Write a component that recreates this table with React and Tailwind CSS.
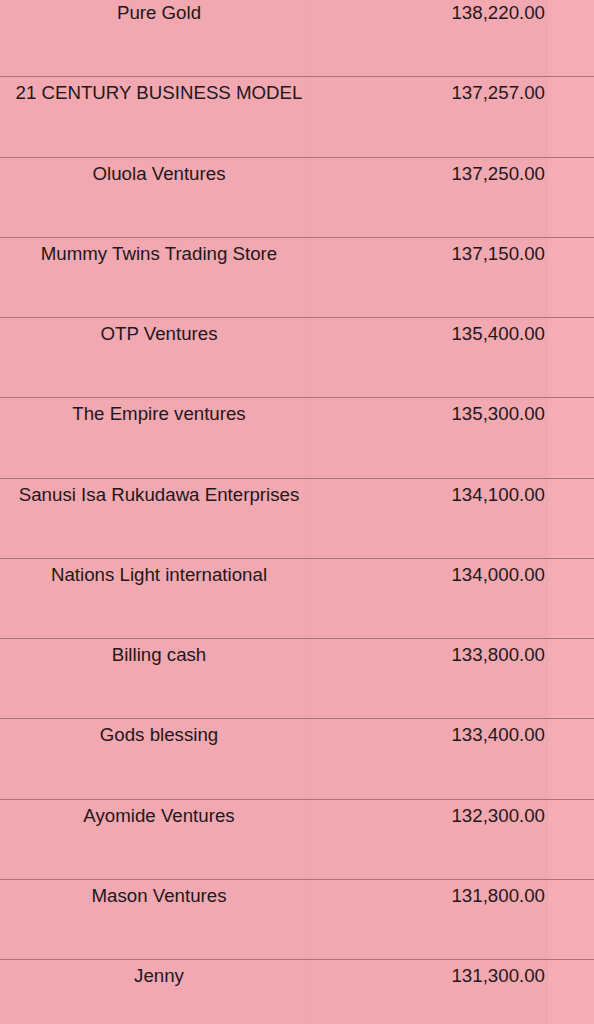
import React from 'react';

const rows = [
  { name: 'Pure Gold', amount: '138,220.00' },
  { name: '21 CENTURY BUSINESS MODEL', amount: '137,257.00' },
  { name: 'Oluola Ventures', amount: '137,250.00' },
  { name: 'Mummy Twins Trading Store', amount: '137,150.00' },
  { name: 'OTP Ventures', amount: '135,400.00' },
  { name: 'The Empire ventures', amount: '135,300.00' },
  { name: 'Sanusi Isa Rukudawa Enterprises', amount: '134,100.00' },
  { name: 'Nations Light international', amount: '134,000.00' },
  { name: 'Billing cash', amount: '133,800.00' },
  { name: 'Gods blessing', amount: '133,400.00' },
  { name: 'Ayomide Ventures', amount: '132,300.00' },
  { name: 'Mason Ventures', amount: '131,800.00' },
  { name: 'Jenny', amount: '131,300.00' },
];

const App = () => {
  return (
    <div
      className="h-[1024px] w-[594px] overflow-hidden bg-[#f2a8b1] text-[18.7px] leading-[22px] text-[#24171a]"
      style={{ fontFamily: '"Liberation Sans", Arial, sans-serif' }}
    >
      <div className="-mt-[3px]">
        {rows.map((row, index) => (
          <div
            key={index}
            className="grid h-[80.27px] grid-cols-[307px_240px_1fr] border-b border-[#a8747a]"
          >
            <div className="pl-[11px] pt-[5px] text-center whitespace-nowrap">{row.name}</div>
            <div className="border-l border-[#f0a5ae] pr-[2px] pt-[5px] text-right">{row.amount}</div>
            <div className="border-l border-[#f0a5ae] bg-[#f4acb5]"></div>
          </div>
        ))}
      </div>
    </div>
  );
};

export default App;
